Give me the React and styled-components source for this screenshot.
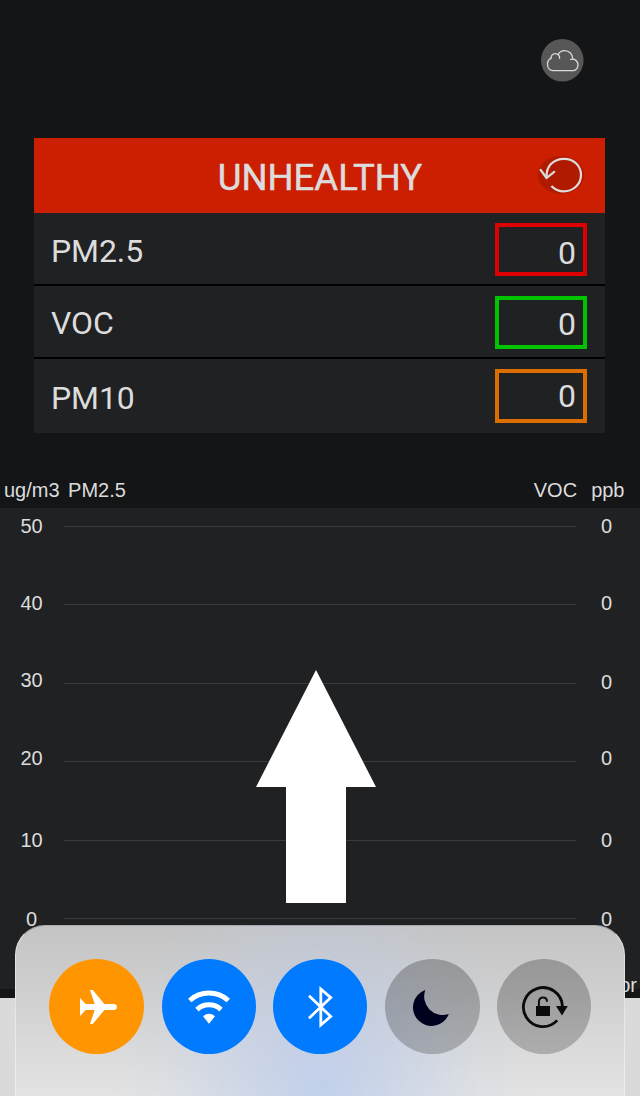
import React from 'react';
import styled, { createGlobalStyle } from 'styled-components';

const Colors = {
    BACKGROUND: '#141517',
    PANEL: '#202123',
    TEXT: '#dcdcdc',
    UNHEALTHY: '#cc1e00',
};

const GlobalStyle = createGlobalStyle`
    * {
        box-sizing: border-box;
    }

    body {
        margin: 0;
        background: #dadada;
    }
`;

const Page = styled.div`
    position: relative;
    width: 640px;
    height: 1096px;
    overflow: hidden;
    color: ${Colors.TEXT};
    font-family: 'Liberation Sans', Arial, sans-serif;
    font-size: 20px;
`;

const Screen = styled.main`
    display: flex;
    flex-direction: column;
    height: 998px;
    background: ${Colors.BACKGROUND};
`;

const TopBar = styled.header`
    display: flex;
    justify-content: flex-end;
    height: 138px;
    padding: 39px 56px 0 0;
`;

const Card = styled.section`
    width: 571px;
    margin-left: 34px;
    background: ${Colors.PANEL};
    font-family: Roboto, sans-serif;
`;

const Status = styled.div`
    display: grid;
    grid-template-columns: 67px 1fr 67px;
    align-items: start;
    height: 75px;
    padding-top: 18px;
    background: ${Colors.UNHEALTHY};
`;

const StatusTitle = styled.h1`
    grid-column: 2;
    margin: 0;
    padding: 0 0 0 1px;
    font-size: 36.5px;
    font-weight: 400;
    line-height: 43px;
    text-align: center;
    white-space: nowrap;
    -webkit-text-stroke: 0.5px ${Colors.TEXT};
`;

const Reading = styled.div`
    display: flex;
    justify-content: space-between;
    align-items: flex-start;
    height: ${props => props.$height}px;
    padding: 10px 18px 0 17px;
    border-bottom: ${props => (props.$last ? 'none' : '2px solid #000')};
    font-size: 32px;
    line-height: 38px;
`;

const ReadingName = styled.span`
    padding-top: ${props => props.$top}px;
    letter-spacing: -0.1px;
`;

const ReadingValue = styled.span`
    width: 92px;
    height: ${props => props.$height}px;
    padding: ${props => props.$top}px 7px 0 0;
    border: 4px solid ${props => props.$color};
    text-align: right;
`;

const AxisTitles = styled.div`
    display: flex;
    height: 75px;
    padding: 46px 15.5px 0 4px;
    line-height: 23px;
`;

const AxisTitle = styled.span`
    margin-left: ${props => props.$gap || 0};
`;

const Chart = styled.section`
    display: grid;
    grid-template-columns: 64px 512px 64px;
    align-items: start;
    height: 481px;
    background: ${Colors.PANEL};
`;

const Scale = styled.div`
    display: grid;
    grid-template-rows: ${props => props.$rows};
    padding-top: 7px;
    padding-right: ${props => props.$right}px;
    line-height: 23px;
    text-align: center;
`;

const GridLines = styled.div`
    display: grid;
    grid-template-rows: 78px 79px 78px 79px 78px 1px;
    padding-top: 18px;
`;

const GridLine = styled.div`
    border-top: 1px solid #3a3b3d;
`;

const TimeLabel = styled.span`
    grid-column: 3;
    padding: 43px 3px 0 0;
    line-height: 23px;
    text-align: right;
`;

const SwipeArrow = styled.svg`
    position: absolute;
    left: 256px;
    top: 670px;
`;

const ControlSheet = styled.aside`
    position: absolute;
    left: 15px;
    top: 925px;
    display: grid;
    grid-template-columns: 113px 111px 112px 112px 94px;
    align-items: start;
    width: 610px;
    height: 190px;
    padding: 33px 0 0 33px;
    border: 1px solid rgba(255, 255, 255, 0.45);
    border-top-color: rgba(120, 120, 120, 0.5);
    border-radius: 30px 30px 0 0;
    background:
        radial-gradient(ellipse 210px 240px at 305px 165px, rgba(180, 200, 240, 0.7), rgba(182, 201, 240, 0.4) 40%, rgba(185, 203, 240, 0.12) 75%, rgba(185, 203, 240, 0) 100%),
        linear-gradient(#c4c4c4, #cfcfcf 35%, #dedede 75%, #e3e3e3 90%);
`;

const Toggle = styled.button`
    display: block;
    width: ${props => props.$width || 94}px;
    height: 95px;
    padding: 0;
    border: 0;
    border-radius: 50%;
    background: ${props => props.$color || 'linear-gradient(rgba(0, 0, 0, 0.25), rgba(0, 0, 0, 0.21))'};

    svg {
        display: block;
    }
`;

const CloudIcon = () => (
    <svg width="43" height="43" viewBox="0 0 43 43" fill="none" stroke="#dcdcdc" strokeWidth="1.3" strokeLinecap="round">
        <circle cx="21.3" cy="21.3" r="21.3" fill="#575757" stroke="none"/>
        <path d="M10 19.3C7.8 20.3 6.5 22.5 6.5 25C6.5 28.8 8.8 31.6 12 31.6H32.4C35.1 31.6 37 29 37 26.1C37 23 34.8 20.2 32 20.2C31 20.1 30.2 20.1 29.5 20.5"/>
        <path d="M10 19.3C9.9 16.5 11.8 14.6 14.2 14.6C17 14.6 18.9 16.8 18.6 19.4"/>
        <path d="M17.3 15.2C18.6 13 20.8 11.6 23.5 11.6C28.2 11.6 31.8 15.3 31.8 20"/>
    </svg>
);

const RefreshIcon = () => (
    <svg width="46" height="38" viewBox="0 0 46 38" fill="none" stroke="#dcdcdc" strokeWidth="2.2">
        <ellipse cx="23" cy="19" rx="23" ry="19" fill="#b01a00" stroke="none"/>
        <path d="M8.9 21.5C7.3 10.5 15.5 2.8 26 2.8C36 2.8 43 10 43 19C43 28 35.6 35.4 26 35.4C20.6 35.4 16.5 33.4 13.4 30"/>
        <path d="M2.7 14L8.6 22L16.2 15.8" strokeLinecap="round" strokeLinejoin="round"/>
    </svg>
);

const PlaneIcon = () => (
    <svg width="95" height="95" fill="#fff">
        <path d="M31 39L36.7 45H45.7L41 31H43.8L55.4 45H65C69 45 69 51 65 51H55.4L43.8 65H41L45.7 51H36.7L31 57Z"/>
    </svg>
);

const WifiIcon = () => (
    <svg width="94" height="95" fill="none" stroke="#fff" strokeWidth="5">
        <path d="M27.7 41.5A28.9 28.9 0 0 1 66.3 41.5M35 50.6A17.5 17.5 0 0 1 59 50.6"/>
        <path d="M41 57.2Q47 52.4 53 57.2L47 64.7Z" fill="#fff" stroke="none"/>
    </svg>
);

const BluetoothIcon = () => (
    <svg width="94" height="95" fill="none" stroke="#fff" strokeWidth="2.8">
        <path d="M36 36.8L57.7 57.4L47.8 66V30L57.7 38.6L36 59.2"/>
    </svg>
);

const MoonIcon = () => (
    <svg width="95" height="95" fill="#00021d">
        <path d="M40.3 31A18.5 18.5 0 1 0 63.8 55A18.6 18.6 0 0 1 40.3 31Z"/>
    </svg>
);

const RotationLockIcon = () => (
    <svg width="95" height="95" fill="none" stroke="#090b0c">
        <path d="M65.4 47A19.5 19.5 0 1 0 60.2 61.4" strokeWidth="2.8"/>
        <path d="M59 47H70.8L65 56.5Z" fill="#090b0c" stroke="none"/>
        <path d="M39 47H53V57H39Z" fill="#090b0c" stroke="none"/>
        <path d="M41.9 47V42.5C41.9 37.2 50 37.2 50 42.8" strokeWidth="2"/>
    </svg>
);

const readings = [
    { name: 'PM2.5', color: '#dc0000', height: 73, nameTop: 9, boxHeight: 53, valueTop: 7 },
    { name: 'VOC', color: '#00c400', height: 73, nameTop: 8, boxHeight: 53, valueTop: 5 },
    { name: 'PM10', color: '#dc6e00', height: 74, nameTop: 10, boxHeight: 54, valueTop: 4 },
];

const App = () => (
    <Page>
        <GlobalStyle/>
        <Screen>
            <TopBar>
                <CloudIcon/>
            </TopBar>
            <Card>
                <Status>
                    <StatusTitle>UNHEALTHY</StatusTitle>
                    <RefreshIcon/>
                </Status>
                {readings.map((item, i) => (
                    <Reading key={item.name} $height={item.height} $last={i === readings.length - 1}>
                        <ReadingName $top={item.nameTop}>{item.name}</ReadingName>
                        <ReadingValue $height={item.boxHeight} $top={item.valueTop} $color={item.color}>0</ReadingValue>
                    </Reading>
                ))}
            </Card>
            <AxisTitles>
                <AxisTitle>ug/m3</AxisTitle>
                <AxisTitle $gap="8.5px">PM2.5</AxisTitle>
                <AxisTitle $gap="auto">VOC</AxisTitle>
                <AxisTitle $gap="14px">ppb</AxisTitle>
            </AxisTitles>
            <Chart>
                <Scale $right={1} $rows="77px 77px 78px 82px 79px 23px">
                    {[50, 40, 30, 20, 10, 0].map(tick => <span key={tick}>{tick}</span>)}
                </Scale>
                <GridLines>
                    {[50, 40, 30, 20, 10, 0].map(tick => <GridLine key={tick}/>)}
                </GridLines>
                <Scale $right={3} $rows="77px 79px 76px 82px 79px 23px">
                    {[0, 1, 2, 3, 4, 5].map(row => <span key={row}>0</span>)}
                </Scale>
                <TimeLabel>or</TimeLabel>
            </Chart>
        </Screen>
        <SwipeArrow width="120" height="233" viewBox="0 0 120 233" fill="#fff">
            <path d="M60 0L120 117H90V233H30V117H0Z"/>
        </SwipeArrow>
        <ControlSheet>
            <Toggle $width={95} $color="#ff9500"><PlaneIcon/></Toggle>
            <Toggle $color="#007aff"><WifiIcon/></Toggle>
            <Toggle $color="#007aff"><BluetoothIcon/></Toggle>
            <Toggle $width={95}><MoonIcon/></Toggle>
            <Toggle><RotationLockIcon/></Toggle>
        </ControlSheet>
    </Page>
);

export default App;
